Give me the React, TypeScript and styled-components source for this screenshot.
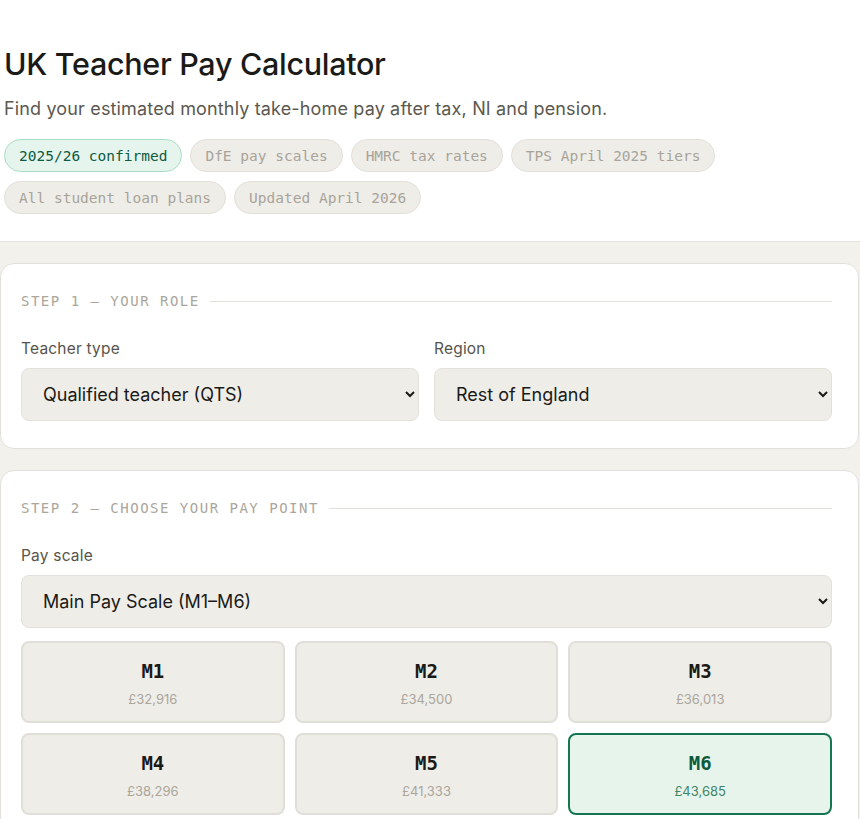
import styled, { createGlobalStyle } from "styled-components";

const sans = `"Inter", "Liberation Sans", sans-serif`;
const mono = `"DejaVu Sans Mono", "Liberation Mono", monospace`;

interface PayPoint {
  code: string;
  salary: string;
}

const chips = [
  { label: "2025/26 confirmed", ok: true },
  { label: "DfE pay scales" },
  { label: "HMRC tax rates" },
  { label: "TPS April 2025 tiers" },
  { label: "All student loan plans" },
  { label: "Updated April 2026" },
];

const payPoints: Array<PayPoint> = [
  { code: "M1", salary: "£32,916" },
  { code: "M2", salary: "£34,500" },
  { code: "M3", salary: "£36,013" },
  { code: "M4", salary: "£38,296" },
  { code: "M5", salary: "£41,333" },
  { code: "M6", salary: "£43,685" },
];

const App = () => {
  return (
    <>
      <GlobalStyle />
      <Header>
        <Title>UK Teacher Pay Calculator</Title>
        <Lead>Find your estimated monthly take-home pay after tax, NI and pension.</Lead>
        <ChipRow>
          {chips.map(({ label, ok }) => (
            <Chip key={label} $ok={!!ok}>
              {label}
            </Chip>
          ))}
        </ChipRow>
      </Header>
      <Main>
        <Card>
          <StepTitle>Step 1 — Your role</StepTitle>
          <TwoCols>
            <Field>
              <Label>Teacher type</Label>
              <Select defaultValue="qts">
                <option value="qts">Qualified teacher (QTS)</option>
                <option value="unq">Unqualified teacher</option>
              </Select>
            </Field>
            <Field>
              <Label>Region</Label>
              <Select defaultValue="rest">
                <option value="rest">Rest of England</option>
                <option value="fringe">London fringe</option>
                <option value="outer">Outer London</option>
                <option value="inner">Inner London</option>
              </Select>
            </Field>
          </TwoCols>
        </Card>
        <Card>
          <StepTitle>Step 2 — Choose your pay point</StepTitle>
          <Field>
            <Label>Pay scale</Label>
            <Select defaultValue="mps">
              <option value="mps">Main Pay Scale (M1–M6)</option>
              <option value="ups">Upper Pay Scale (U1–U3)</option>
            </Select>
          </Field>
          <PointGrid>
            {payPoints.map(({ code, salary }) => (
              <Point key={code} $active={code === "M6"}>
                <PointCode>{code}</PointCode>
                <PointSalary>{salary}</PointSalary>
              </Point>
            ))}
          </PointGrid>
        </Card>
      </Main>
    </>
  );
};

export default App;

const GlobalStyle = createGlobalStyle`
  html, body {
    margin: 0;
    padding: 0;
    background: #f2f1ec;
    font-family: ${sans};
    color: #1a1a17;
    overflow: hidden;
  }
  * {
    box-sizing: border-box;
  }
`;

const Header = styled.header`
  background: #ffffff;
  padding: 44px 4px 27px;
  border-bottom: 1px solid #e4e2db;
`;

const Title = styled.h1`
  margin: 0;
  font-size: 30.5px;
  font-weight: 500;
  letter-spacing: -0.3px;
  line-height: 40px;
  color: #1a1a17;
`;

const Lead = styled.p`
  margin: 12px 0 0;
  font-size: 18px;
  letter-spacing: 0.15px;
  line-height: 26px;
  color: #5b5850;
`;

const ChipRow = styled.div`
  display: flex;
  flex-wrap: wrap;
  gap: 9px 8px;
  margin-top: 17px;
  max-width: 740px;
`;

const Chip = styled.span<{ $ok: boolean }>`
  display: inline-flex;
  align-items: center;
  height: 33px;
  padding: 0 14px;
  border-radius: 999px;
  font-family: ${mono};
  font-size: 14.5px;
  border: 1px solid ${(p) => (p.$ok ? "#a9dcc4" : "#e1dfd8")};
  background: ${(p) => (p.$ok ? "#e5f5ed" : "#efede8")};
  color: ${(p) => (p.$ok ? "#0e5a3d" : "#a8a49a")};
`;

const Main = styled.main`
  display: flex;
  flex-direction: column;
  gap: 21px;
  padding: 21px 1px 0 0;
`;

const Card = styled.section`
  background: #ffffff;
  border: 1px solid #e2e0d9;
  border-radius: 14px;
  padding: 27px 26px 27px 20px;
`;

const StepTitle = styled.div`
  display: flex;
  align-items: center;
  gap: 10px;
  height: 20px;
  margin-bottom: 28px;
  font-family: ${mono};
  font-size: 14px;
  letter-spacing: 1.5px;
  text-transform: uppercase;
  color: #aaa69c;

  &::after {
    content: "";
    flex: 1;
    height: 1px;
    background: #e2e0d9;
  }
`;

const TwoCols = styled.div`
  display: grid;
  grid-template-columns: 1fr 1fr;
  gap: 15px;
`;

const Field = styled.div`
  display: flex;
  flex-direction: column;
  gap: 9px;
`;

const Label = styled.label`
  font-size: 15.5px;
  letter-spacing: 0.2px;
  line-height: 20px;
  color: #57544c;
`;

const Select = styled.select`
  height: 53px;
  width: 100%;
  padding: 0 22px 0 17px;
  font-family: ${sans};
  font-size: 18px;
  color: #1a1a17;
  background: #efede8;
  border: 1px solid #e3e1da;
  border-radius: 8px;
  outline: none;
`;

const PointGrid = styled.div`
  display: grid;
  grid-template-columns: repeat(3, 1fr);
  gap: 10px;
  margin-top: 13px;
`;

const Point = styled.div<{ $active: boolean }>`
  display: flex;
  flex-direction: column;
  align-items: center;
  justify-content: center;
  gap: 9px;
  height: 82px;
  padding-top: 3px;
  border-radius: 8px;
  border: 2px solid ${(p) => (p.$active ? "#157553" : "#e0ded7")};
  background: ${(p) => (p.$active ? "#e7f4ec" : "#efede8")};
  color: ${(p) => (p.$active ? "#0e5a3d" : "#1a1a17")};

  > span:last-child {
    color: ${(p) => (p.$active ? "#3f8566" : "#aaa69c")};
  }
`;

const PointCode = styled.span`
  font-family: ${mono};
  font-size: 19px;
  font-weight: 700;
  line-height: 22px;
`;

const PointSalary = styled.span`
  font-size: 13px;
  line-height: 16px;
`;
